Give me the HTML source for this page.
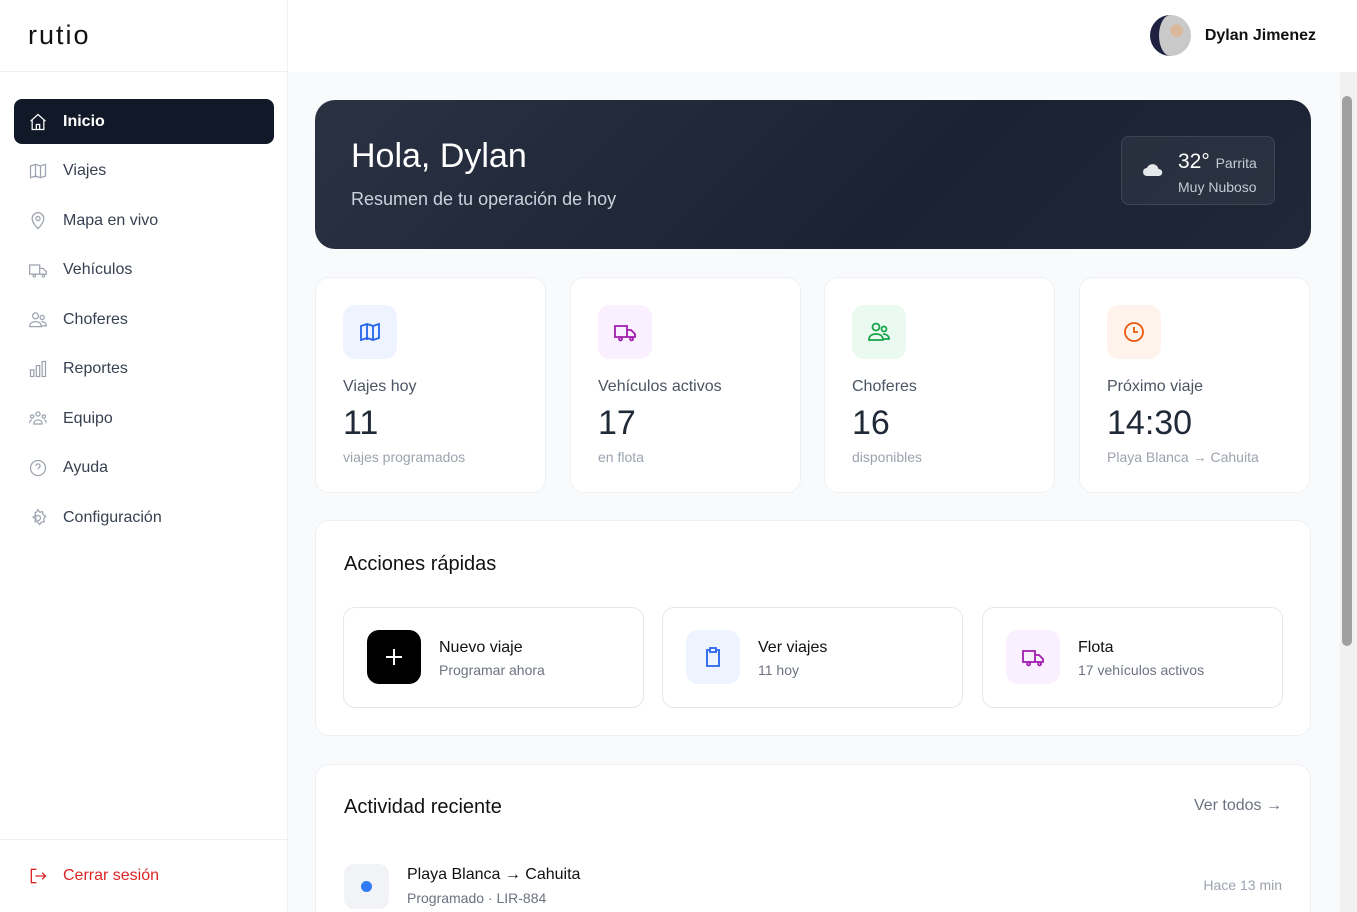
<!DOCTYPE html>
<html style="width:1357px;height:912px;overflow:hidden"><head><meta charset="utf-8"><style>
*{box-sizing:border-box;margin:0;padding:0}
body{width:1357px;height:912px;overflow:hidden;font-family:"Liberation Sans",sans-serif;background:#f8fafc;position:relative;color:#0f172a}
.side{position:absolute;left:0;top:0;width:288px;height:912px;background:#fff;border-right:1px solid #eef0f3}
.logo{height:72px;border-bottom:1px solid #eef0f3;padding:20px 28px;font-size:27px;letter-spacing:2px;color:#111}
.nav{position:absolute;left:14px;top:99px;width:260px}
.item{height:45px;margin-bottom:4.5px;display:flex;align-items:center;padding-left:14px;font-size:16px;color:#374151;border-radius:8px}
.item svg{width:20px;height:20px;margin-right:15px;stroke:#9ca3af;fill:none;stroke-width:1.5}
.item.act{background:#111827;color:#fff;font-weight:bold}
.item.act svg{stroke:#fff}
.logout{position:absolute;left:0;top:839px;width:287px;border-top:1px solid #eef0f3;height:73px;display:flex;align-items:center;padding-left:28px;color:#dc2626;font-size:16px}
.logout svg{width:20px;height:20px;stroke:#dc2626;fill:none;stroke-width:1.6;margin-right:15px}
.top{position:absolute;left:288px;top:0;right:0;height:72px;background:#fff}
.user{position:absolute;right:41px;top:15px;display:flex;align-items:center;font-size:16px;font-weight:bold;color:#111}
.av{width:41px;height:41px;border-radius:50%;background:radial-gradient(circle at 55% 38%,#d9b89c 0 20%,#c9c9c9 21% 100%);margin-right:14px;border-left:9px solid #1e2140}
.hero{position:absolute;left:315px;top:100px;width:996px;height:149px;border-radius:20px;background:linear-gradient(135deg,#2a3243,#1b2232 60%,#202838);color:#fff}
.hero h1{position:absolute;left:36px;top:37px;font-size:34px;font-weight:normal}
.hero p{position:absolute;left:36px;top:89px;font-size:18px;color:#cbd2dc}
.wx{position:absolute;left:806px;top:36px;width:154px;height:69px;border:1px solid #3c4556;border-radius:8px;background:rgba(255,255,255,.05)}
.card{position:absolute;background:#fff;border:1px solid #eef0f3;border-radius:14px}
.stat{top:277px;width:231px;height:216px}
.ib{position:absolute;left:27px;top:27px;width:54px;height:54px;border-radius:12px;display:flex;align-items:center;justify-content:center}
.ib svg{width:24px;height:24px;fill:none;stroke-width:1.8}
.stat .l{position:absolute;left:27px;top:100px;font-size:16px;color:#4b5563}
.stat .n{position:absolute;left:27px;top:126px;font-size:34px;color:#1f2937}
.stat .s{position:absolute;left:27px;top:171px;font-size:14px;color:#9ca3af}
.qa{position:absolute;top:607px;width:301px;height:101px;border:1px solid #e5e7eb;border-radius:12px;background:#fff}
.qa .ib{left:23px;top:22px}
.qa .t{position:absolute;left:95px;top:31px;font-size:16px;color:#111}
.qa .u{position:absolute;left:95px;top:54px;font-size:14px;color:#6b7280}
h2{position:absolute;font-size:20px;font-weight:normal;color:#111}
</style></head><body>
<div class="side">
<div class="logo">rutio</div>
<div class="nav">
<div class="item act"><svg viewBox="0 0 24 24"><path d="M3 11l9-8 9 8M5 9.5V21h14V9.5M10 21v-6h4v6"/></svg>Inicio</div>
<div class="item"><svg viewBox="0 0 24 24"><path d="M3 6l6-2 6 2 6-2v14l-6 2-6-2-6 2zM9 4v16M15 6v14"/></svg>Viajes</div>
<div class="item"><svg viewBox="0 0 24 24"><path d="M12 21s-7-6.5-7-12a7 7 0 0114 0c0 5.5-7 12-7 12z"/><circle cx="12" cy="9" r="2.5"/></svg>Mapa en vivo</div>
<div class="item"><svg viewBox="0 0 24 24"><path d="M2 6h12v11H2zM14 10h4l4 4v3h-8M6 19a1.5 1.5 0 100-.1M17 19a1.5 1.5 0 100-.1"/></svg>Vehículos</div>
<div class="item"><svg viewBox="0 0 24 24"><circle cx="9" cy="7" r="3.5"/><circle cx="17" cy="9" r="2.5"/><path d="M2 20c0-4 3-6 7-6s7 2 7 6zM16 14c3 0 6 1.5 6 5h-6"/></svg>Choferes</div>
<div class="item"><svg viewBox="0 0 24 24"><path d="M3 13h4v8H3zM10 8h4v13h-4zM17 3h4v18h-4z"/></svg>Reportes</div>
<div class="item"><svg viewBox="0 0 24 24"><circle cx="12" cy="6" r="2.5"/><circle cx="5" cy="9" r="2"/><circle cx="19" cy="9" r="2"/><path d="M7 18c0-3 2-5 5-5s5 2 5 5zM2 17c0-2 1-4 3-4M22 17c0-2-1-4-3-4"/></svg>Equipo</div>
<div class="item"><svg viewBox="0 0 24 24"><circle cx="12" cy="12" r="9"/><path d="M9.5 9.5a2.5 2.5 0 115 0c0 2-2.5 2-2.5 4M12 17h.01"/></svg>Ayuda</div>
<div class="item"><svg viewBox="0 0 24 24"><circle cx="12" cy="12" r="3"/><path d="M12 2l2 3 3.5-.5.5 3.5 3 2-2 3 .5 3.5-3.5.5-2 3-2-3-3.5-.5.5-3.5-3-2 3-2-.5-3.5L10 5z"/></svg>Configuración</div>
</div>
<div class="logout"><svg viewBox="0 0 24 24"><path d="M10 4H4v16h6M9 12h12M17 8l4 4-4 4"/></svg>Cerrar sesión</div>
</div>
<div class="top"><div class="user"><div class="av"></div>Dylan Jimenez</div></div>
<div style="position:absolute;left:1340px;top:72px;width:17px;height:840px;background:#f1f1f1"><div style="position:absolute;left:2px;top:24px;width:10px;height:550px;background:#a0a0a0;border-radius:5px"></div></div>
<div class="hero"><h1>Hola, Dylan</h1><p>Resumen de tu operación de hoy</p>
<div class="wx"><svg style="position:absolute;left:20px;top:24px" width="22" height="16" viewBox="0 0 22 16"><path d="M5 15a4 4 0 010-8 6 6 0 0111.5 1A3.5 3.5 0 0117 15z" fill="#e5e7eb"/></svg>
<div style="position:absolute;left:56px;top:13px;font-size:21px">32° <span style="font-size:14px;color:#c4cad3">Parrita</span></div>
<div style="position:absolute;left:56px;top:42px;font-size:14px;color:#c4cad3">Muy Nuboso</div></div></div>

<div class="card stat" style="left:315px"><div class="ib" style="background:#eef4ff"><svg viewBox="0 0 24 24" stroke="#2563eb"><path d="M3 6l6-2 6 2 6-2v14l-6 2-6-2-6 2zM9 4v16M15 6v14"/></svg></div><div class="l">Viajes hoy</div><div class="n">11</div><div class="s">viajes programados</div></div>
<div class="card stat" style="left:570px"><div class="ib" style="background:#faf0ff"><svg viewBox="0 0 24 24" stroke="#a21caf"><path d="M2 6h12v11H2zM14 10h4l4 4v3h-8M6 19a1.5 1.5 0 100-.1M17 19a1.5 1.5 0 100-.1"/></svg></div><div class="l">Vehículos activos</div><div class="n">17</div><div class="s">en flota</div></div>
<div class="card stat" style="left:824px"><div class="ib" style="background:#eafaf0"><svg viewBox="0 0 24 24" stroke="#16a34a"><circle cx="9" cy="7" r="3.5"/><circle cx="17" cy="9" r="2.5"/><path d="M2 20c0-4 3-6 7-6s7 2 7 6zM16 14c3 0 6 1.5 6 5h-6"/></svg></div><div class="l">Choferes</div><div class="n">16</div><div class="s">disponibles</div></div>
<div class="card stat" style="left:1079px"><div class="ib" style="background:#fff3ec"><svg viewBox="0 0 24 24" stroke="#ea580c"><circle cx="12" cy="12" r="9"/><path d="M12 7v5h4"/></svg></div><div class="l">Próximo viaje</div><div class="n">14:30</div><div class="s">Playa Blanca → Cahuita</div></div>

<div class="card" style="left:315px;top:520px;width:996px;height:216px"><h2 style="left:28px;top:32px">Acciones rápidas</h2></div>
<div class="qa" style="left:343px"><div class="ib" style="background:#000"><svg viewBox="0 0 24 24" stroke="#fff" style="stroke-width:2"><path d="M12 4v16M4 12h16"/></svg></div><div class="t">Nuevo viaje</div><div class="u">Programar ahora</div></div>
<div class="qa" style="left:662px"><div class="ib" style="background:#eef4ff"><svg viewBox="0 0 24 24" stroke="#2563eb"><path d="M8 5H6v16h12V5h-2M9 3h6v4H9z"/></svg></div><div class="t">Ver viajes</div><div class="u">11 hoy</div></div>
<div class="qa" style="left:982px"><div class="ib" style="background:#faf0ff"><svg viewBox="0 0 24 24" stroke="#a21caf"><path d="M2 6h12v11H2zM14 10h4l4 4v3h-8M6 19a1.5 1.5 0 100-.1M17 19a1.5 1.5 0 100-.1"/></svg></div><div class="t">Flota</div><div class="u">17 vehículos activos</div></div>

<div class="card" style="left:315px;top:764px;width:996px;height:160px;border-bottom:none;border-radius:14px 14px 0 0">
<h2 style="left:28px;top:31px">Actividad reciente</h2>
<div style="position:absolute;right:28px;top:32px;font-size:16px;color:#6b7280">Ver todos →</div>
<div style="position:absolute;left:28px;top:99px;width:45px;height:45px;border-radius:10px;background:#f1f3f6"><div style="position:absolute;left:17px;top:17px;width:11px;height:11px;border-radius:50%;background:#2f7bf5"></div></div>
<div style="position:absolute;left:91px;top:101px;font-size:16px;color:#111">Playa Blanca → Cahuita</div>
<div style="position:absolute;left:91px;top:125px;font-size:14px;color:#6b7280">Programado · LIR-884</div>
<div style="position:absolute;right:28px;top:112px;font-size:14px;color:#9ca3af">Hace 13 min</div>
</div>
</body></html>
